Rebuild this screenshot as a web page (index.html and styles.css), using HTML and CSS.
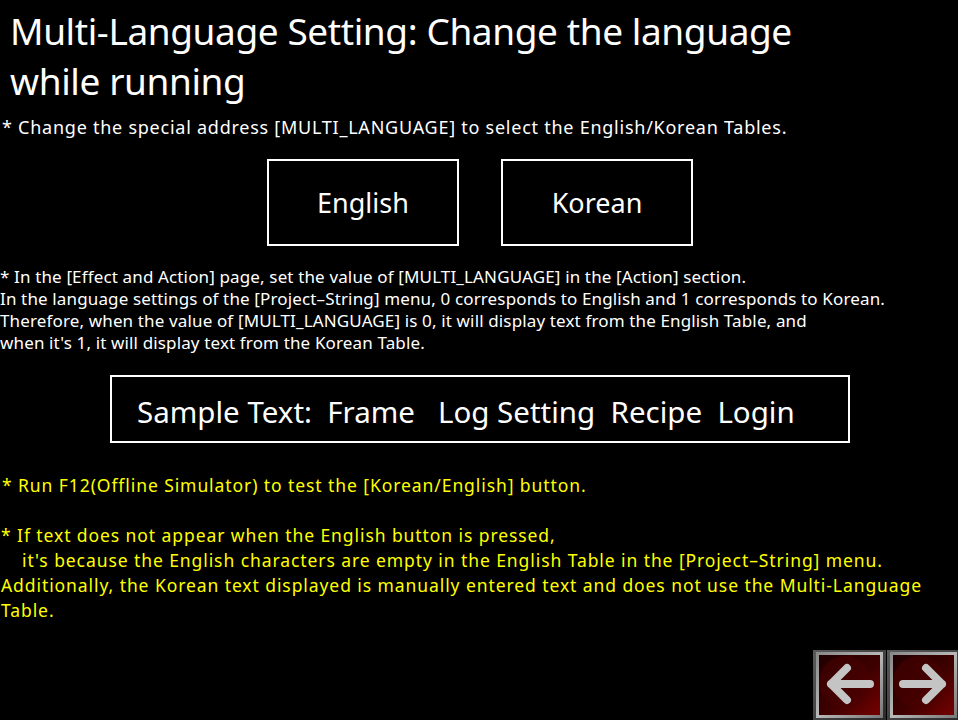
FILE: index.html
```html
<!DOCTYPE html>
<html>
<head>
<meta charset="utf-8">
<link rel="stylesheet" href="styles.css">
</head>
<body>
<div class="page">
  <h1 class="title">Multi-Language Setting: Change the language<br>while running</h1>
  <p class="subtitle">* Change the special address [MULTI_LANGUAGE] to select the English/Korean Tables.</p>
  <div class="lang-row">
    <div class="lang-btn">English</div>
    <div class="lang-btn">Korean</div>
  </div>
  <p class="para">* In the [Effect and Action] page, set the value of [MULTI_LANGUAGE] in the [Action] section.<br>In the language settings of the [Project–String] menu, 0 corresponds to English and 1 corresponds to Korean.<br>Therefore, when the value of [MULTI_LANGUAGE] is 0, it will display text from the English Table, and<br>when it's 1, it will display text from the Korean Table.</p>
  <div class="sample">Sample Text:&nbsp; Frame &nbsp; Log Setting&nbsp; Recipe&nbsp; Login</div>
  <p class="yellow run">* Run F12(Offline Simulator) to test the [Korean/English] button.</p>
  <p class="yellow note">* If text does not appear when the English button is pressed,<br><span class="indent">it's because the English characters are empty in the English Table in the [Project–String] menu.</span><br>Additionally, the Korean text displayed is manually entered text and does not use the Multi-Language<br>Table.</p>
  <div class="nav-row">
    <div class="nav-btn">
      <svg width="73" height="70" viewBox="0 0 73 70">
        <defs>
          <linearGradient id="frameA" x1="0" y1="0" x2="1" y2="1">
            <stop offset="0" stop-color="#5a5a5a"/>
            <stop offset="1" stop-color="#2a2a2a"/>
          </linearGradient>
          <linearGradient id="bevA" x1="0" y1="0" x2="1" y2="1">
            <stop offset="0" stop-color="#8a8a8a"/>
            <stop offset="0.5" stop-color="#b8b8b8"/>
            <stop offset="1" stop-color="#7a7a7a"/>
          </linearGradient>
          <linearGradient id="redA" x1="0" y1="0" x2="1" y2="1">
            <stop offset="0" stop-color="#200000"/>
            <stop offset="0.55" stop-color="#3e0000"/>
            <stop offset="1" stop-color="#760000"/>
          </linearGradient>
        </defs>
        <rect x="0" y="0" width="73" height="70" fill="url(#frameA)"/>
        <rect x="4.5" y="3.5" width="64" height="63" fill="none" stroke="url(#bevA)" stroke-width="3"/>
        <rect x="6" y="5" width="61" height="60" fill="url(#redA)"/>
        <circle cx="32" cy="32" r="26" fill="#4a0000" opacity="0.55"/>
        <path d="M18 34 H57 M18 34 L34 18 M18 34 L34 50" stroke="#c4c4c4" stroke-width="8" stroke-linecap="round" stroke-linejoin="round" fill="none"/>
      </svg>
    </div>
    <div class="nav-btn">
      <svg width="73" height="70" viewBox="0 0 73 70">
        <rect x="0" y="0" width="73" height="70" fill="url(#frameA)"/>
        <rect x="4.5" y="3.5" width="64" height="63" fill="none" stroke="url(#bevA)" stroke-width="3"/>
        <rect x="6" y="5" width="61" height="60" fill="url(#redA)"/>
        <circle cx="32" cy="32" r="26" fill="#4a0000" opacity="0.55"/>
        <path d="M55 34 H16 M55 34 L39 18 M55 34 L39 50" stroke="#c4c4c4" stroke-width="8" stroke-linecap="round" stroke-linejoin="round" fill="none"/>
      </svg>
    </div>
  </div>
</div>
</body>
</html>
```
FILE: styles.css
```css
html, body {
  margin: 0;
  padding: 0;
  background: #000;
  overflow: hidden;
}
.page {
  width: 958px;
  height: 720px;
  font-family: "Noto Sans", "Open Sans", sans-serif;
  color: #fff;
}
.title {
  margin: 0;
  padding: 6px 0 0 10px;
  font-size: 37px;
  font-weight: 400;
  line-height: 50px;
  letter-spacing: -0.4px;
}
.subtitle {
  margin: 10px 0 0 2px;
  font-size: 18px;
  line-height: 22px;
  letter-spacing: 0.75px;
  white-space: nowrap;
}
.lang-row {
  display: flex;
  gap: 42px;
  margin: 21px 0 0 267px;
}
.lang-btn {
  width: 188px;
  height: 83px;
  border: 2px solid #fff;
  display: flex;
  align-items: center;
  justify-content: center;
  font-size: 27px;
}
.para {
  margin: 20px 0 0 0;
  font-size: 17px;
  line-height: 22px;
  letter-spacing: 0.14px;
  white-space: nowrap;
}
.sample {
  margin: 21px 0 0 110px;
  width: 711px;
  height: 59px;
  border: 2px solid #fff;
  padding: 5px 0 0 25px;
  display: flex;
  align-items: center;
  font-size: 29.5px;
  white-space: pre;
}
.yellow {
  color: #ffff00;
  font-size: 17.5px;
  line-height: 25px;
  letter-spacing: 0.92px;
  white-space: nowrap;
  margin-left: 2px;
}
.run {
  margin-top: 30px;
  margin-bottom: 0;
}
.note {
  margin-top: 25px;
  margin-bottom: 0;
  margin-left: 1px;
}
.indent {
  padding-left: 21px;
}
.nav-row {
  display: flex;
  gap: 1px;
  margin: 27px 0 0 813px;
}
.nav-btn {
  width: 73px;
  height: 70px;
  flex: none;
}
.nav-btn svg {
  display: block;
}
```
